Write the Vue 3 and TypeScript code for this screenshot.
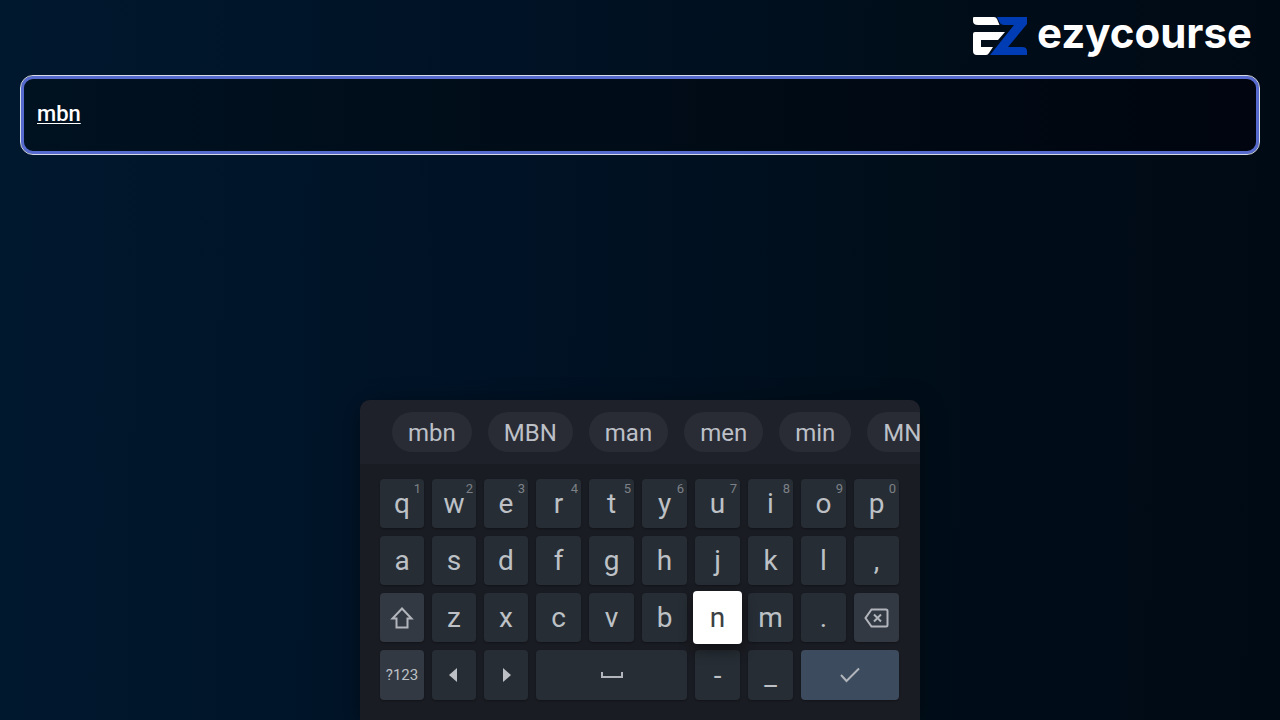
<script setup lang="ts">
import { ref } from 'vue'

interface Key {
  id: string
  label?: string
  hint?: string
  icon?: 'shift' | 'delete' | 'left' | 'right' | 'space' | 'enter'
  span?: number
  tone?: 'special' | 'enter' | 'small'
}

const query = ref('mbn')
const activeKey = ref('n')

const suggestions: string[] = ['mbn', 'MBN', 'man', 'men', 'min', 'MN']

const letters = (row: string): Key[] => row.split('').map((c) => ({ id: c, label: c }))

const keys: Key[] = [
  ...letters('qwertyuiop').map((k, i) => ({ ...k, hint: String((i + 1) % 10) })),
  ...letters('asdfghjkl,'),
  { id: 'Shift', icon: 'shift', tone: 'special' },
  ...letters('zxcvbnm.'),
  { id: 'Delete', icon: 'delete', tone: 'special' },
  { id: 'Symbols', label: '?123', tone: 'small' },
  { id: 'Cursor left', icon: 'left' },
  { id: 'Cursor right', icon: 'right' },
  { id: 'Space', icon: 'space', span: 3 },
  ...letters('-_'),
  { id: 'Enter', icon: 'enter', span: 2, tone: 'enter' },
]

function press(key: Key): void {
  if (key.label && key.label.length === 1) {
    query.value += key.label
    activeKey.value = key.id
  } else if (key.icon === 'space') {
    query.value += ' '
  } else if (key.icon === 'delete') {
    query.value = query.value.slice(0, -1)
  }
}
</script>

<template>
  <main class="screen">
    <header class="header">
      <div class="logo">
        <svg class="logo-mark" viewBox="0 0 54 38" aria-hidden="true">
          <path fill="#fff" d="M1 0H21Q23 0 24 2L26.500 8H5Q0 8 0 4V1Q0 0 1 0Z" />
          <path fill="#fff" d="M2 15H32L25 23H8V30H20L16 36Q15 38 13 38H4Q0 38 0 34V17Q0 15 2 15Z" />
          <path fill="#003cb4" d="M24 0H54V7L35 30H49Q54 30 54 34V38H17L41 8H31Q28 8 27 6Z" />
        </svg>
        <span class="logo-name">ezycourse</span>
      </div>
    </header>

    <input v-model="query" class="search" type="text" aria-label="Search" spellcheck="false" />

    <section class="keyboard" aria-label="Keyboard">
      <div class="suggestions">
        <button v-for="s in suggestions" :key="s" class="chip" type="button" @click="query = s">{{ s }}</button>
      </div>
      <div class="keys">
        <button
          v-for="key in keys"
          :key="key.id"
          type="button"
          class="key"
          :class="[
            key.tone,
            { active: key.id === activeKey, 'span-2': key.span === 2, 'span-3': key.span === 3 },
          ]"
          :aria-label="key.id"
          @click="press(key)"
        >
          <template v-if="key.label">{{ key.label }}</template>
          <span v-if="key.hint" class="hint">{{ key.hint }}</span>
          <svg v-if="key.icon" class="icon" viewBox="0 0 28 28" aria-hidden="true">
            <path v-if="key.icon === 'shift'" class="line" d="M14 4.500L23.500 14.500H19.500V23.500H8.500V14.500H4.500Z" />
            <template v-else-if="key.icon === 'delete'">
              <path class="line" d="M8.500 5.500H23Q24.500 5.500 24.500 7V21Q24.500 22.500 23 22.500H8.500L2.500 14Z" />
              <path class="line" d="M11 10.500L18 17.500M18 10.500L11 17.500" />
            </template>
            <path v-else-if="key.icon === 'left'" class="solid" d="M17 7V21L9 14Z" />
            <path v-else-if="key.icon === 'right'" class="solid" d="M11 7V21L19 14Z" />
            <path v-else-if="key.icon === 'space'" class="line" d="M4 11V16H24V11" />
            <path v-else class="line" d="M5 14L10.500 20L23 7.500" />
          </svg>
        </button>
      </div>
    </section>
  </main>
</template>

<style>
body {
  background: #000e1c;
}
</style>

<style scoped>
.screen {
  box-sizing: border-box;
  min-height: 100vh;
  display: flex;
  flex-direction: column;
  overflow: hidden;
  background: linear-gradient(91deg, #00182e 0%, #001225 40%, #000e1a 70%, #000a14 100%);
  font-family: Roboto, "Liberation Sans", sans-serif;
}

.header {
  display: flex;
  justify-content: flex-end;
  height: 74px;
  padding-right: 28px;
}

.logo {
  display: flex;
  align-items: center;
  gap: 10px;
  height: 72px;
}

.logo-mark {
  width: 54px;
  height: 38px;
}

.logo-name {
  color: #fff;
  font-family: Inter, Roboto, sans-serif;
  font-size: 42px;
  font-weight: 700;
  line-height: 48px;
  margin-top: -6px;
}

.search {
  box-sizing: border-box;
  height: 80px;
  margin: 1px 20px 0;
  padding: 0 16px 3px;
  border: 1px solid #d5dae8;
  border-radius: 13px;
  outline: none;
  box-shadow: inset 0 0 0 3px #5669cc;
  background: linear-gradient(90deg, #001120 0%, #000c17 50%, #00050f 100%);
  color: #fff;
  font-family: inherit;
  font-size: 22px;
  font-weight: 500;
  text-decoration: underline;
  text-decoration-thickness: 1px;
  text-underline-offset: 2px;
}

.keyboard {
  box-sizing: border-box;
  width: 100%;
  max-width: 560px;
  margin: auto auto 0;
  border-radius: 10px 10px 0 0;
  background: #1a1c23;
  box-shadow: 0 4px 24px rgba(0, 0, 0, 0.4);
}

.suggestions {
  display: flex;
  align-items: center;
  gap: 16px;
  height: 64px;
  padding-left: 32px;
  overflow: hidden;
  border-radius: 10px 10px 0 0;
  background: #1e2129;
}

.chip {
  flex: none;
  height: 40px;
  padding: 2px 16px 0;
  border: 0;
  border-radius: 20px;
  background: #292c35;
  color: #bdc0c7;
  font-family: inherit;
  font-size: 24px;
}

.keys {
  display: grid;
  grid-template-columns: repeat(3, 44fr) repeat(7, 45fr);
  grid-template-rows: repeat(3, 49px) 50px;
  gap: 8px;
  padding: 15px 21px 20px 20px;
}

.key {
  position: relative;
  display: flex;
  align-items: center;
  justify-content: center;
  min-width: 0;
  padding: 0;
  border: 0;
  border-radius: 4px;
  background: #262d34;
  box-shadow: 0 1px 2px rgba(0, 0, 0, 0.3);
  color: #bdc1c6;
  font-family: inherit;
  font-size: 28px;
}

.special,
.small {
  background: #323942;
}

.small {
  font-size: 15px;
}

.enter {
  background: #3c4b5d;
}

.span-2 {
  grid-column: span 2;
}

.span-3 {
  grid-column: span 3;
}

.active {
  z-index: 1;
  margin: -2px;
  background: #fff;
  color: #3c4043;
  box-shadow: 0 6px 14px rgba(0, 0, 0, 0.45);
}

.hint {
  position: absolute;
  top: 2px;
  right: 3px;
  color: #7d8187;
  font-size: 13px;
  line-height: 16px;
}

.icon {
  width: 28px;
  height: 28px;
}

.line {
  fill: none;
  stroke: #b2b6bc;
  stroke-width: 2;
}

.solid {
  fill: #bdc1c6;
}
</style>
